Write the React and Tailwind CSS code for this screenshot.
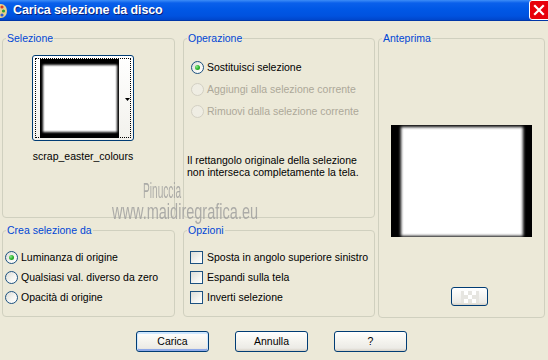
import React from "react";

function Radio({ checked, disabled, label }) {
  return (
    <div className="flex items-center h-full">
      <span
        className={
          "w-[13px] h-[13px] rounded-full border flex items-center justify-center shrink-0 " +
          (disabled
            ? "border-[#D3D0C3] bg-[#EFEDE3]"
            : "border-[#1C5180] bg-[linear-gradient(135deg,#DCDCD7_0%,#F6F6F3_60%,#FFFFFF_100%)]")
        }
      >
        {checked && (
          <span className="w-[5px] h-[5px] rounded-full bg-[radial-gradient(circle_at_35%_35%,#8CE68C_0%,#2EB52E_50%,#138A13_100%)]" />
        )}
      </span>
      <span className={"ml-[3px] whitespace-nowrap " + (disabled ? "text-[#ACA899]" : "text-black")}>{label}</span>
    </div>
  );
}

function Check({ label }) {
  return (
    <div className="flex items-center h-[20px]">
      <span className="w-[13px] h-[13px] border border-[#1C5180] bg-[linear-gradient(135deg,#DCDCD7_0%,#F4F4F0_60%,#FFFFFF_100%)] shrink-0" />
      <span className="ml-[4px] whitespace-nowrap">{label}</span>
    </div>
  );
}

function Group({ title, className, children }) {
  return (
    <fieldset className={"border border-[#D0D0BF] rounded-[4px] " + className}>
      <legend className="ml-[3px] px-[1px] leading-[13px] text-[#0046D5]">{title}</legend>
      {children}
    </fieldset>
  );
}

function Button({ children, def }) {
  return (
    <button
      className={
        "w-[73px] h-[21px] border border-[#003C74] rounded-[3px] bg-[linear-gradient(to_bottom,#FFFFFF_0%,#F4F3EE_50%,#ECEBE6_85%,#D6D0C5_100%)] text-[10.5px] leading-[13px] text-black " +
        (def ? "shadow-[inset_0_1px_0_1px_#CEE7FF,inset_0_-1px_0_1px_#8FA9E8]" : "")
      }
    >
      {children}
    </button>
  );
}

export default function App() {
  return (
    <div className="w-[548px] h-[360px] bg-[#ECE9D8] overflow-hidden relative font-['Liberation_Sans',Arial,sans-serif] text-[10.5px] leading-[13px] text-black">
      {/* title bar */}
      <div className="h-[21px] flex items-center bg-[linear-gradient(to_bottom,#3D8DF7_0%,#0A60EB_15%,#0058E6_45%,#0052DF_80%,#0046CB_100%)] border-b border-[#0037A8]">
        <svg width="8" height="16" viewBox="0 0 8 16" className="mt-[1px]">
          <ellipse cx="1" cy="8" rx="6" ry="7" fill="#E8D08A" />
          <circle cx="2" cy="4" r="1.6" fill="#D63A2A" />
          <circle cx="3.5" cy="8" r="1.6" fill="#2F9E3A" />
          <circle cx="2" cy="12" r="1.6" fill="#2F5BD6" />
        </svg>
        <span className="ml-[5px] text-white font-bold text-[12.5px] tracking-[-0.1px] [text-shadow:1px_1px_0_#0A1F7A]">
          Carica selezione da disco
        </span>
        <span className="ml-auto mr-[-3px] w-[22px] h-[20px] rounded-[3px] border border-white bg-red-600 bg-[#DA5530] z-10 flex items-center pl-[3px]">
          <svg width="12" height="12" viewBox="0 0 12 12">
            <path d="M2 2 L10 10 M10 2 L2 10" stroke="#FFFFFF" strokeWidth="2.2" strokeLinecap="square" />
          </svg>
        </span>
      </div>

      {/* groups */}
      <div className="flex pl-[2px] pt-[11px]">
        <div className="w-[173px] flex flex-col">
          <Group title="Selezione" className="h-[186px]">
            <div className="ml-[29px] mt-[10px] w-[102px]">
              <div className="w-[102px] h-[86px] border border-[#003C74] rounded-[3px] bg-[linear-gradient(to_bottom,#FFFFFF,#F2F1EC)] p-[2px]">
                <div className="w-full h-full border border-dotted border-black flex items-center relative">
                  <div className="ml-[4px] w-[79px] h-[79px] bg-black pt-[6px] pb-[6px] pl-[3px] pr-[2px] overflow-hidden">
                    <div className="w-full h-full bg-white blur-[1px]" />
                  </div>
                  <svg width="5" height="3" viewBox="0 0 5 3" className="ml-[6px] mt-[2px]">
                    <path d="M0 0 H5 L2.5 3 Z" fill="black" />
                  </svg>
                </div>
              </div>
              <div className="mt-[9px] text-center">scrap_easter_colours</div>
            </div>
          </Group>
          <Group title="Crea selezione da" className="h-[93px] mt-[6px]">
            <div className="pl-[2px] mt-[10px] flex flex-col">
              <div className="h-[20px]"><Radio checked label="Luminanza di origine" /></div>
              <div className="h-[20px]"><Radio label="Qualsiasi val. diverso da zero" /></div>
              <div className="h-[20px]"><Radio label="Opacità di origine" /></div>
            </div>
          </Group>
        </div>

        <div className="w-[192px] ml-[8px] flex flex-col">
          <Group title="Operazione" className="h-[186px]">
            <div className="pl-[7px] mt-[11px] flex flex-col">
              <div className="h-[22px]"><Radio checked label="Sostituisci selezione" /></div>
              <div className="h-[22px]"><Radio disabled label="Aggiungi alla selezione corrente" /></div>
              <div className="h-[22px]"><Radio disabled label="Rimuovi dalla selezione corrente" /></div>
            </div>
            <p className="pl-[3px] mt-[32px] leading-[12px] whitespace-nowrap">
              Il rettangolo originale della selezione
              <br />
              non interseca completamente la tela.
            </p>
          </Group>
          <Group title="Opzioni" className="h-[93px] mt-[6px]">
            <div className="pl-[6px] mt-[10px] flex flex-col">
              <Check label="Sposta in angolo superiore sinistro" />
              <Check label="Espandi sulla tela" />
              <Check label="Inverti selezione" />
            </div>
          </Group>
        </div>

        <Group title="Anteprima" className="w-[167px] h-[286px] ml-[3px]">
          <div className="ml-[12px] mt-[80px] w-[141px] h-[112px] bg-black pl-[10px] pr-[9px] pt-[2px] pb-[1px] overflow-hidden">
            <div className="w-full h-full bg-white blur-[1.5px]" />
          </div>
          <div className="ml-[72px] mt-[50px] w-[37px] h-[19px] border border-[#003C74] rounded-[3px] bg-[linear-gradient(to_bottom,#FFFFFF,#ECEBE6_85%,#D6D0C5)] flex items-center justify-center">
            <svg width="18" height="12" viewBox="0 0 18 12">
              <rect x="0" y="0" width="18" height="12" fill="#E6E5E0" />
              <rect x="3" y="0" width="4" height="4" fill="#FFFFFF" />
              <rect x="11" y="0" width="4" height="4" fill="#FFFFFF" />
              <rect x="7" y="4" width="4" height="4" fill="#FFFFFF" />
              <rect x="3" y="8" width="4" height="4" fill="#FFFFFF" />
              <rect x="11" y="8" width="4" height="4" fill="#FFFFFF" />
            </svg>
          </div>
        </Group>
      </div>

      {/* buttons */}
      <div className="flex gap-[26px] pl-[136px] mt-[13px]">
        <Button def>Carica</Button>
        <Button>Annulla</Button>
        <Button>?</Button>
      </div>

      {/* watermark */}
      <div className="absolute left-[143px] top-[183px] text-[22px] leading-[16px] text-[#9C9C9C] opacity-80 scale-x-[0.46] origin-left whitespace-nowrap pointer-events-none">
        Pinuccia
      </div>
      <div className="absolute left-[112px] top-[204px] text-[22px] leading-[16px] text-[#9C9C9C] opacity-80 scale-x-[0.66] origin-left whitespace-nowrap pointer-events-none">
        www.maidiregrafica.eu
      </div>
    </div>
  );
}
